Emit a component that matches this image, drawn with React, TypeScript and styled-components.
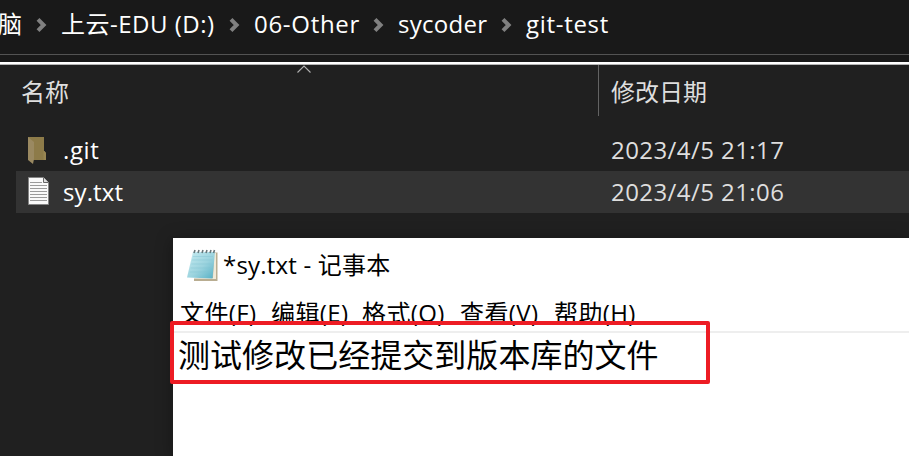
import React from "react";
import styled, { createGlobalStyle } from "styled-components";

const GlobalStyle = createGlobalStyle`
  * { box-sizing: border-box; }
  body { margin: 0; background: #202020; overflow: hidden; }
`;

const Explorer = styled.main`
  position: relative;
  width: 909px;
  height: 456px;
  overflow: hidden;
  background: #202020;
  color: #fff;
  font-family: "Open Sans", "Noto Sans CJK SC", sans-serif;
  font-size: 24px;
  line-height: 32px;
  white-space: nowrap;
`;

const AddressBar = styled.nav`
  display: flex;
  align-items: flex-start;
  height: 55px;
  padding-top: 8px;
  background: #191919;
  border-bottom: 1px solid #535353;
`;

const Crumb = styled.span<{ $width: number; $spacing?: number; $shift?: number }>`
  flex: none;
  width: ${(p) => p.$width}px;
  margin-left: ${(p) => p.$shift ?? 0}px;
  letter-spacing: ${(p) => p.$spacing ?? 0}px;
`;

const Chevron = styled.svg`
  flex: none;
  width: 11px;
  height: 16px;
  margin: 9px 14px 0 0;
`;

const Divider = styled.div`
  height: 10px;
  background: #191919;
  border-bottom: 1px solid #b5b5b5;
  box-shadow: inset 0 -2px #fff;
`;

const Header = styled.div`
  display: grid;
  grid-template-columns: 598px 1fr;
  height: 51px;
  color: #dedede;
`;

const NameHeading = styled.div`
  display: flex;
  padding: 11px 0 0 21px;
`;

const SortArrow = styled.svg`
  width: 16px;
  height: 9px;
  margin: -11px 0 0 227px;
`;

const DateHeading = styled.div`
  padding: 11px 0 0 12px;
  border-left: 1px solid #636363;
`;

const FileList = styled.div`
  padding: 13px 0 0 16px;
`;

const FileRow = styled.div<{ $active?: boolean }>`
  display: grid;
  grid-template-columns: 47px 548px 1fr;
  height: 42px;
  padding-top: 5px;
  background: ${(p) => (p.$active ? "#333333" : "transparent")};
`;

const FileIcon = styled.svg`
  width: 24px;
  height: 30px;
  margin: 0 0 0 10px;
`;

const FileName = styled.span<{ $spacing: number }>`
  letter-spacing: ${(p) => p.$spacing}px;
`;

const FileDate = styled.span`
  color: #dedede;
  letter-spacing: 0.43px;
`;

const Notepad = styled.section`
  position: absolute;
  left: 173px;
  top: 238px;
  width: 736px;
  height: 218px;
  background: #fff;
  color: #000;
  box-shadow: 0 0 0 2px #1c1c1c, 0 2px 16px rgba(0, 0, 0, 0.35);
`;

const TitleBar = styled.header`
  display: flex;
  height: 58px;
  padding: 11px 0 0 13px;
`;

const NotepadIcon = styled.svg`
  width: 33px;
  height: 34px;
  margin-right: 4px;
`;

const Title = styled.span`
  letter-spacing: 0.2px;
`;

const MenuBar = styled.div`
  display: flex;
  height: 37px;
  padding: 1px 0 0 7px;
  border-bottom: 2px solid #eeeeee;
`;

const MenuItem = styled.span<{ $width: number }>`
  flex: none;
  width: ${(p) => p.$width}px;
  letter-spacing: 0.4px;
`;

const Content = styled.p`
  margin: -3px 0 0;
  padding: 0 0 0 5px;
  font-family: "Noto Sans CJK SC", sans-serif;
  font-size: 32px;
  line-height: 46px;
  letter-spacing: 0.04px;
`;

const Highlight = styled.div`
  position: absolute;
  left: 170px;
  top: 321px;
  width: 540px;
  height: 63px;
  border: 4px solid #ed1c24;
  border-radius: 2px;
`;

const Separator = () => (
  <Chevron viewBox="0 0 11 16">
    <path d="M2 2.4 7.6 8 2 13.6" fill="none" stroke="#808080" strokeWidth="4" />
  </Chevron>
);

const crumbs = [
  { text: "脑", width: 38, shift: -2, spacing: 0 },
  { text: "上云-EDU (D:)", width: 168, spacing: 0.5 },
  { text: "06-Other", width: 119, spacing: 0.7 },
  { text: "sycoder", width: 103, spacing: 0.3 },
  { text: "git-test", width: 90, spacing: 0.7 },
];

const menus = [
  { text: "文件(F)", width: 91 },
  { text: "编辑(E)", width: 91 },
  { text: "格式(O)", width: 98 },
  { text: "查看(V)", width: 94 },
  { text: "帮助(H)", width: 90 },
];

export default function App() {
  return (
    <>
      <GlobalStyle />
      <Explorer>
        <AddressBar>
          {crumbs.map((c, i) => (
            <React.Fragment key={c.text}>
              {i > 0 && <Separator />}
              <Crumb $width={c.width} $spacing={c.spacing} $shift={c.shift}>{c.text}</Crumb>
            </React.Fragment>
          ))}
        </AddressBar>
        <Divider />
        <Header>
          <NameHeading>
            名称
            <SortArrow viewBox="0 0 16 9">
              <path d="M1.5 7.5 8 1l6.5 6.5" fill="none" stroke="#b0b0b0" strokeWidth="1.1" />
            </SortArrow>
          </NameHeading>
          <DateHeading>修改日期</DateHeading>
        </Header>
        <FileList>
          <FileRow>
            <FileIcon viewBox="0 0 24 30">
              <path d="M2 3h16v14l2 2v7H2z" fill="#8d7b49" />
              <path d="M17.5 17h1l1.5 2v7h-2.5z" fill="#988552" />
              <path d="m2 3 6 5v17l-1 5-5-4z" fill="#9a8961" />
            </FileIcon>
            <FileName $spacing={0.6}>.git</FileName>
            <FileDate>2023/4/5 21:17</FileDate>
          </FileRow>
          <FileRow $active>
            <FileIcon viewBox="0 0 24 30">
              <path d="M2.5 1.5h15l5 5v22h-20z" fill="#fafafa" stroke="#858585" />
              <path d="M17.5 1.5v5h5" fill="#ddd" stroke="#666" />
              <path d="M4 6.5h12M4 9.5h17M4 12.5h17M4 15.5h17M4 18.5h17M4 21.5h17M4 24.5h17" stroke="#9b9b9b" />
            </FileIcon>
            <FileName $spacing={0.1}>sy.txt</FileName>
            <FileDate>2023/4/5 21:06</FileDate>
          </FileRow>
        </FileList>

        <Notepad>
          <TitleBar>
            <NotepadIcon viewBox="0 0 33 34">
              <defs>
                <linearGradient id="pad" x1="0" y1="0" x2="1" y2="1">
                  <stop offset="0" stopColor="#c9edf2" />
                  <stop offset=".55" stopColor="#9bd3de" />
                  <stop offset="1" stopColor="#54afc4" />
                </linearGradient>
              </defs>
              <path d="M28 3.5h3.5V32H8v-2.5h18z" fill="#b9ad91" />
              <path d="M28 4h2v26H9l18-1z" fill="#f0ead8" />
              <path d="M7 3h22l-2.5 26.5L1 28.5z" fill="url(#pad)" />
              <path d="M7 7.5h20M6.2 11h20M5.4 15h20M4.6 19h20M3.8 23h20" stroke="#83c4d2" strokeWidth=".7" opacity=".6" />
              <path d="m8 4 1-3M12 4l1-3M16 4l1-3M20 4l1-3M24 4l1-3M27.5 4l1-3" stroke="#68777b" strokeWidth="1.6" />
            </NotepadIcon>
            <Title>*sy.txt - 记事本</Title>
          </TitleBar>
          <MenuBar>
            {menus.map((m) => (
              <MenuItem key={m.text} $width={m.width}>{m.text}</MenuItem>
            ))}
          </MenuBar>
          <Content>测试修改已经提交到版本库的文件</Content>
        </Notepad>
        <Highlight />
      </Explorer>
    </>
  );
}
